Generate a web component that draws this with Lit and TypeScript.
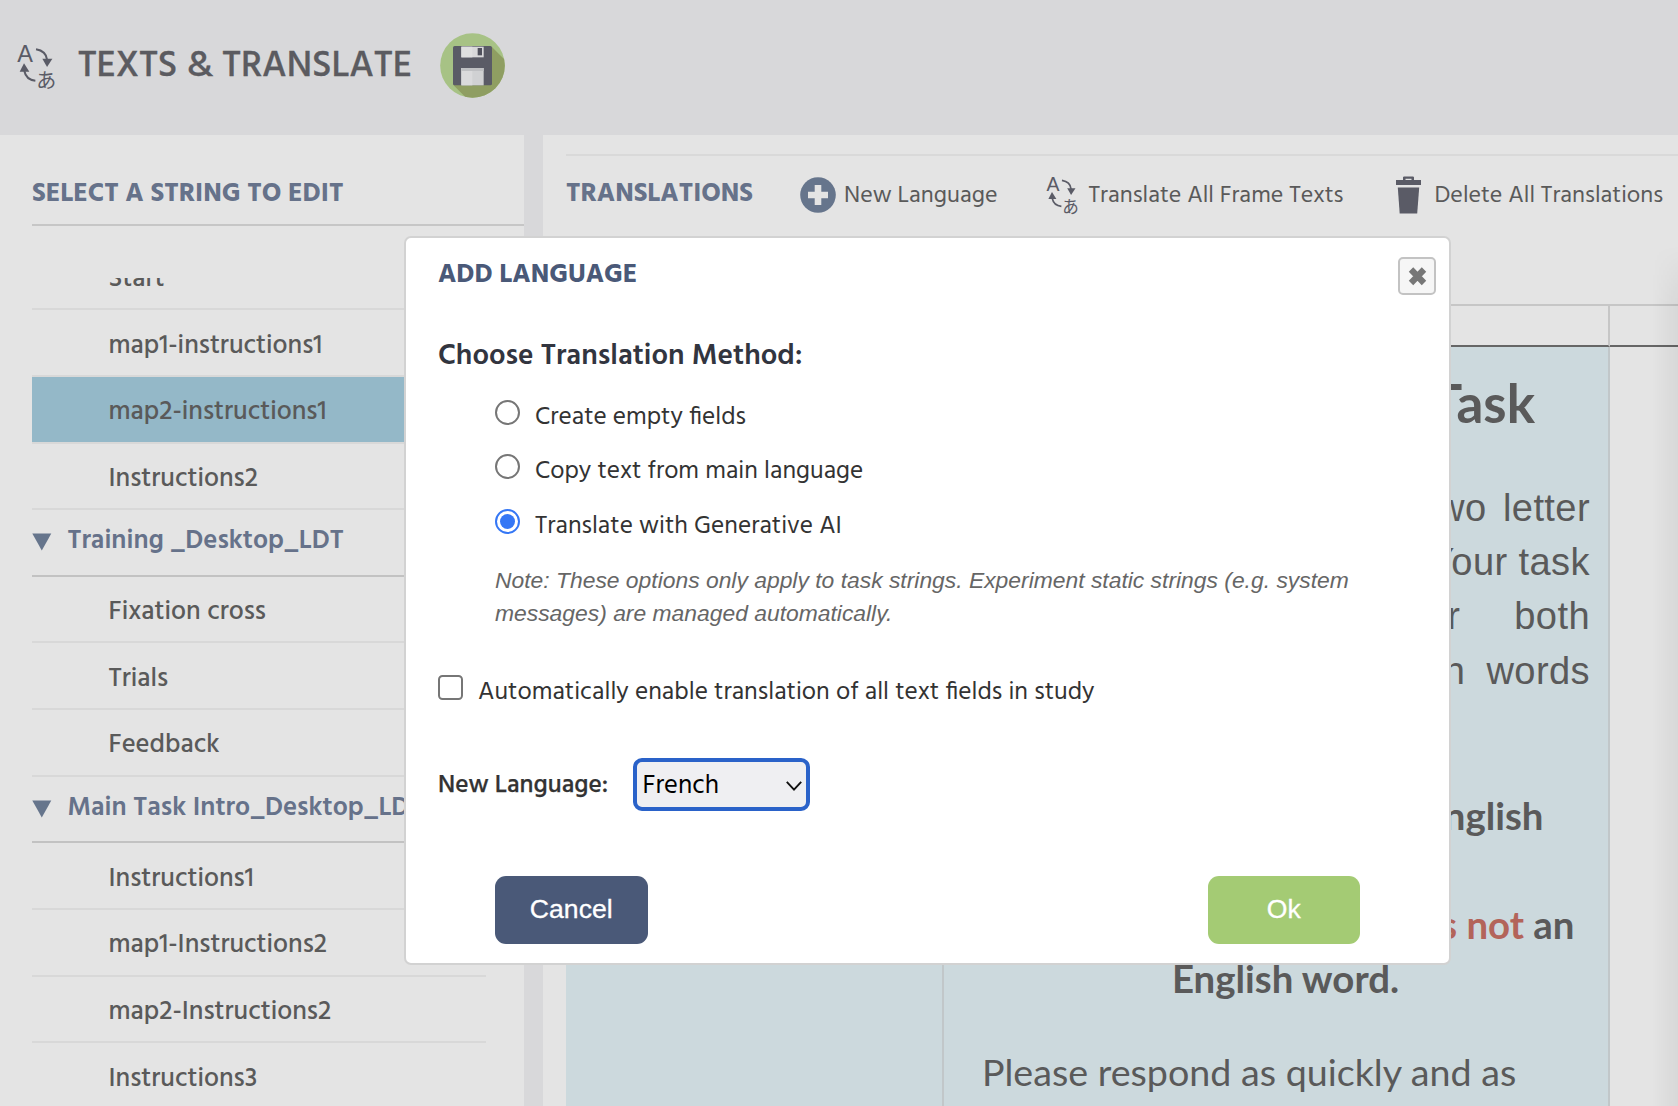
import { LitElement, html, css, svg } from "lit";
import { customElement, property } from "lit/decorators.js";
import { classMap } from "lit/directives/class-map.js";
import { styleMap } from "lit/directives/style-map.js";

const ENTRIES: { label: string; group?: boolean; selected?: boolean }[] = [
  { label: "Start" },
  { label: "map1-instructions1" },
  { label: "map2-instructions1", selected: true },
  { label: "Instructions2" },
  { label: "Training _Desktop_LDT", group: true },
  { label: "Fixation cross" },
  { label: "Trials" },
  { label: "Feedback" },
  { label: "Main Task Intro_Desktop_LDT", group: true },
  { label: "Instructions1" },
  { label: "map1-Instructions2" },
  { label: "map2-Instructions2" },
  { label: "Instructions3" },
];

const METHODS = [
  { label: "Create empty fields", checked: false },
  { label: "Copy text from main language", checked: false },
  { label: "Translate with Generative AI", checked: true },
];

const BODY_LINES = [
  { text: "see two letter", gap: 5.5 },
  { text: "Your task", gap: 0 },
  { text: "for both", gap: 43 },
  { text: "in words", gap: 10 },
];

@customElement("translate-icon")
export class TranslateIcon extends LitElement {
  @property({ type: Number }) width = 37.4;

  static styles = css`
    :host { display: block; flex: none; line-height: 0; }
    .latin { font-family: "Liberation Sans", sans-serif; }
    .kana { font-family: "Noto Sans CJK JP", sans-serif; font-weight: 400; }
  `;

  render() {
    const height = (this.width * 140) / 112;
    return html`<svg width=${this.width} height=${height} viewBox="24 55 112 140" overflow="visible" fill="#5a5b66">
      ${svg`
        <text class="latin" x="22" y="109" font-size="72" textLength="47" lengthAdjust="spacingAndGlyphs">A</text>
        <text class="kana" x="79" y="187" font-size="60">あ</text>
        <path d="M78 71 Q108 76 111 102" fill="none" stroke="#5a5b66" stroke-width="6"/>
        <path d="M97 99 L127 99 L111 124 Z"/>
        <path d="M43 136 Q48 162 76 165" fill="none" stroke="#5a5b66" stroke-width="6"/>
        <path d="M29 138 L58 138 L42 113 Z"/>
      `}
    </svg>`;
  }
}

@customElement("string-list")
export class StringList extends LitElement {
  static styles = css`
    :host { display: block; width: 524px; background: #e4e4e4; box-sizing: border-box; padding-left: 32px; overflow: hidden; }
    .heading { height: 90.5px; box-sizing: border-box; padding-top: 42px; border-bottom: 2px solid #c6c6c6; font-weight: 700; font-size: 26.7px; line-height: 36px; color: #66728a; }
    .viewport { margin-top: 52px; height: 829px; overflow: hidden; }
    .rows { margin-top: -33.8px; width: 454px; }
    .row { height: 66.64px; box-sizing: border-box; border-bottom: 2px solid #d8d8d8; padding: 8.4px 0 0 76.5px; line-height: 56.6px; font-size: 26.6px; font-weight: 500; white-space: nowrap; }
    .row.selected { background: #94b8c8; background-clip: padding-box; }
    .row.group { display: flex; align-items: center; padding: 0 0 2px; gap: 15.5px; color: #66728a; font-size: 26.75px; font-weight: 600; border-bottom-color: #c2c2c2; line-height: 61px; }
    .arrow { width: 20px; height: 18px; flex: none; margin-top: 1px; }
  `;

  render() {
    return html`
      <div class="heading">SELECT A STRING TO EDIT</div>
      <div class="viewport">
        <div class="rows">
          ${ENTRIES.map(
            (e) => html`<div class=${classMap({ row: true, group: !!e.group, selected: !!e.selected })}>
              ${e.group
                ? html`<svg class="arrow" viewBox="0 0 20 18"><path d="M.3.5h19L9.8 17.5z" fill="#66758c" /></svg>`
                : null}<span>${e.label}</span>
            </div>`
          )}
        </div>
      </div>
    `;
  }
}

@customElement("translations-panel")
export class TranslationsPanel extends LitElement {
  static styles = css`
    :host { display: block; position: relative; flex: 1; min-width: 0; background: #e4e4e4; overflow: hidden; padding: 19px 0 0 23px; }
    .toolbar { height: 150px; box-sizing: border-box; border-top: 2px solid #d9d9d9; display: flex; align-items: flex-start; padding-top: 19px; white-space: nowrap; }
    .title { width: 233.5px; font-size: 26.6px; font-weight: 700; color: #66728a; line-height: 40px; }
    .action { display: flex; align-items: center; height: 40px; font-size: 24px; line-height: 38px; }
    .action span { padding-top: 2px; }
    .new { width: 247px; gap: 8.5px; }
    .frames { width: 349px; gap: 11px; }
    .delete { gap: 14px; }
    .table { display: grid; grid-template-columns: 378px 666px 1fr; grid-template-rows: 41px 1fr; height: 802px; border-top: 2px solid #c6c6c6; }
    .head { border-bottom: 2px solid #666; border-right: 2px solid #c6c6c6; }
    .cell { border-right: 2px solid #c1c7c9; background: #ccd9dd; overflow: hidden; }
    .head.last, .cell.last { border-right: 0; }
    .cell.last { background: none; }
    .content { padding: 24px 18px 0 38px; white-space: nowrap; }
    .task-title { font: 700 53px/64px Lato, sans-serif; text-align: right; margin-right: 55px; }
    .body { margin-top: 45.5px; font: 38.1px/54.4px "Liberation Sans", sans-serif; letter-spacing: 0.4px; display: flex; flex-direction: column; align-items: flex-end; }
    .rule { font: 700 38.4px/54.4px Lato, sans-serif; text-align: right; }
    .first { margin: 90px 46.5px 0 0; }
    .second { margin: 54.2px 15.5px 0 0; }
    .third { text-align: center; margin-right: 1px; }
    .not { color: #b3645a; }
    .closing { margin-top: 39px; font: 37.65px/54.4px Lato, sans-serif; }
    .edge { position: absolute; right: 0; top: 110px; bottom: 0; width: 26px; background: linear-gradient(to right, rgba(0, 0, 0, 0), rgba(0, 0, 0, 0.05)); mask-image: linear-gradient(to bottom, transparent, #000 60px); }
  `;

  render() {
    return html`
      <div class="toolbar">
        <div class="title">TRANSLATIONS</div>
        <div class="action new">
          <svg width="36" height="36" viewBox="0 0 36 36">
            <circle cx="18" cy="18" r="17.8" fill="#66758c" />
            <path d="M18 8v20M8 18h20" stroke="#e4e4e4" stroke-width="6.6" />
          </svg>
          <span>New Language</span>
        </div>
        <div class="action frames">
          <translate-icon .width=${31}></translate-icon>
          <span>Translate All Frame Texts</span>
        </div>
        <div class="action delete">
          <svg width="25" height="38" viewBox="0 0 25 38" fill="#5a5b66">
            <path d="M7 4V1.6Q7 .4 8.2 .4H16.8Q18 .4 18 1.6V4H25V9H0V4ZM9.5 4H15.5V2.8H9.5Z" fill-rule="evenodd" />
            <path d="M1.8 11.5H23.2L21.2 37.5H3.7Z" />
          </svg>
          <span>Delete All Translations</span>
        </div>
      </div>
      <div class="table">
        <div class="head"></div>
        <div class="head"></div>
        <div class="head last"></div>
        <div class="cell"></div>
        <div class="cell content">
          <div class="task-title">Task</div>
          <div class="body">
            ${BODY_LINES.map((l) => html`<div style=${styleMap({ wordSpacing: `${l.gap}px` })}>${l.text}</div>`)}
          </div>
          <div class="rule first">English</div>
          <div class="rule second"><span class="not">is not</span> an</div>
          <div class="rule third">English word.</div>
          <div class="closing">Please respond as quickly and as</div>
        </div>
        <div class="cell last"></div>
      </div>
      <div class="edge"></div>
    `;
  }
}

@customElement("language-dialog")
export class LanguageDialog extends LitElement {
  static styles = css`
    :host { display: block; box-sizing: border-box; width: 1047px; height: 729px; background: #fff; border: 2px solid #d2d2d2; border-radius: 7px; padding: 18px 13px 0 32px; color: #333; font-size: 25.3px; white-space: nowrap; }
    .top { display: flex; justify-content: space-between; height: 40px; }
    .title { color: #4a5978; font-weight: 700; font-size: 26.6px; line-height: 40px; }
    .close { width: 38px; height: 38px; margin-top: 1px; box-sizing: border-box; border: 2px solid #c3c3c3; border-radius: 5px; background: #f6f6f6; display: grid; place-items: center; }
    .subtitle { margin: 40.5px 0 14.3px; font-size: 29.3px; font-weight: 600; line-height: 39px; height: 40px; color: #32353f; }
    .option { display: flex; align-items: center; gap: 15px; height: 54.4px; padding-left: 57px; line-height: 54.4px; }
    .radio { width: 25px; height: 25px; box-sizing: border-box; border: 2px solid #767676; border-radius: 50%; margin-bottom: 11.5px; display: grid; place-items: center; }
    .radio.on { border-color: #3577f5; }
    .radio.on::after { content: ""; width: 15px; height: 15px; border-radius: 50%; background: #3577f5; }
    .note { margin: 10.3px 0 0 57px; width: 870px; height: 65.5px; white-space: normal; font: italic 22.86px/32.3px "Liberation Sans", sans-serif; color: #666; }
    .auto { display: flex; align-items: center; gap: 15px; margin-top: 43.5px; height: 40px; line-height: 40.5px; font-size: 25.33px; }
    .box { width: 25px; height: 25px; box-sizing: border-box; border: 2px solid #767676; border-radius: 4.5px; margin-bottom: 11px; }
    .language { display: flex; align-items: center; margin-top: 45px; height: 53px; }
    .label { width: 194.5px; font-weight: 500; padding-top: 2px; -webkit-text-stroke: 0.25px #333; }
    .select { width: 177px; height: 53px; box-sizing: border-box; border: 4px solid #2a62c9; border-radius: 9px; background: #efeff2; color: #000; display: flex; align-items: center; justify-content: space-between; padding: 2px 4px 0 6px; font-size: 26.5px; }
    .buttons { display: flex; justify-content: space-between; margin: 64.5px 76px 0 57px; }
    .button { width: 152.5px; height: 68.5px; border-radius: 11px; font: 26.6px/66.5px "Liberation Sans", sans-serif; text-align: center; color: #fff; background: #4a5978; -webkit-text-stroke: 0.3px #fff; }
    .button.ok { background: #a4cb74; }
  `;

  render() {
    return html`
      <div class="top">
        <div class="title">ADD LANGUAGE</div>
        <div class="close">
          <svg width="22" height="22" viewBox="0 0 22 22">
            <path d="M5 4.5L18 18M18 4.5L5 18" stroke="#777" stroke-width="6.2" />
          </svg>
        </div>
      </div>
      <div class="subtitle">Choose Translation Method:</div>
      ${METHODS.map(
        (m) => html`<div class="option">
          <div class=${classMap({ radio: true, on: m.checked })}></div>
          <span>${m.label}</span>
        </div>`
      )}
      <div class="note">Note: These options only apply to task strings. Experiment static strings (e.g. system messages) are managed automatically.</div>
      <div class="auto">
        <div class="box"></div>
        <span>Automatically enable translation of all text fields in study</span>
      </div>
      <div class="language">
        <div class="label">New Language:</div>
        <div class="select">
          <span>French</span>
          <svg width="16" height="10" viewBox="0 0 16 10"><path d="M.8 .8L8 8.6L15.2 .8" fill="none" stroke="#111" stroke-width="1.9" /></svg>
        </div>
      </div>
      <div class="buttons">
        <div class="button">Cancel</div>
        <div class="button ok">Ok</div>
      </div>
    `;
  }
}

@customElement("app-root")
export class AppRoot extends LitElement {
  static styles = css`
    :host { display: flex; flex-direction: column; position: relative; width: 1678px; height: 1106px; overflow: hidden; background: #d8d8da; color: #5a5a5a; font-family: Hind, "Open Sans", sans-serif; }
    .header { height: 135px; flex: none; box-sizing: border-box; display: flex; align-items: flex-start; padding-left: 18px; white-space: nowrap; }
    .logo { margin-top: 43.5px; }
    .name { margin: 41.5px 0 0 22.5px; width: 338px; font-size: 37.3px; font-weight: 500; line-height: 50px; color: #5b5b60; -webkit-text-stroke: 0.3px #5b5b60; }
    .save { margin: 33px 0 0 24px; }
    .main { flex: 1; min-height: 0; display: flex; gap: 19px; }
    .dialog { position: absolute; left: 404px; top: 236px; }
  `;

  render() {
    return html`
      <div class="header">
        <translate-icon class="logo" .width=${37.4}></translate-icon>
        <div class="name">TEXTS &amp; TRANSLATE</div>
        <svg class="save" width="65" height="65" viewBox="30 24 195 195">
          <defs><clipPath id="disc"><circle cx="127.5" cy="121.5" r="97" /></clipPath></defs>
          <g clip-path="url(#disc)">
            <rect x="30" y="24" width="195" height="195" fill="#a7c285" />
            <path d="M185 65L285 165V280H170L70 180Z" fill="#8f9e62" />
          </g>
          <rect x="69" y="63" width="117" height="118" rx="5" fill="#5a5b66" />
          <rect x="94" y="65" width="67" height="32" fill="#d8d8da" />
          <rect x="94" y="65" width="33" height="32" fill="#dfdfe0" />
          <rect x="143" y="69" width="13" height="22" fill="#4f505c" />
          <rect x="94" y="129" width="67" height="52" fill="#d0d1d3" />
          <rect x="94" y="129" width="33" height="52" fill="#dadadc" />
          <rect x="94" y="129" width="67" height="9" fill="#bfc0c3" />
        </svg>
      </div>
      <div class="main">
        <string-list></string-list>
        <translations-panel></translations-panel>
      </div>
      <language-dialog class="dialog"></language-dialog>
    `;
  }
}
